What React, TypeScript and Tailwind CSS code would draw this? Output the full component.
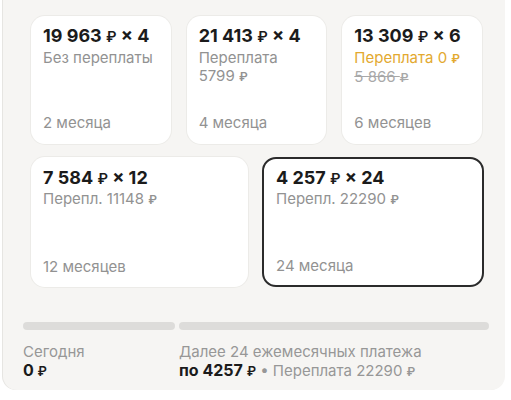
import React from "react";

const Rub = () => <span className="text-[0.8em] font-semibold">₽</span>;

function SmallCard({
    title,
    lines,
    months,
}: {
    title: React.ReactNode;
    lines: React.ReactNode;
    months: string;
}) {
    return (
        <div className="flex h-[128px] flex-col justify-between rounded-[14px] bg-white px-3 pt-[9px] pb-[12px] shadow-[0_0_0_1px_#ecebe8]">
            <div>
                <div className="text-[18px] leading-[22px] font-bold text-[#1b1b1b]">{title}</div>
                <div className="mt-[1px] text-[15px] leading-[18px] text-[#929292]">{lines}</div>
            </div>
            <div className="text-[15px] leading-[18px] text-[#929292]">{months}</div>
        </div>
    );
}

export default function App() {
    return (
        <div className="h-[400px] w-[511px] bg-white font-['Inter',sans-serif]">
            <div className="ml-[3px] h-[390px] w-[502px] rounded-b-[14px] bg-[#f6f5f3] pt-[16px] shadow-[-1px_0_0_#e6e5e2]">
                <div className="ml-[28px] grid w-[451px] grid-cols-3 gap-x-[16px]">
                    <SmallCard
                        title={<>19 963 <Rub /> × 4</>}
                        lines="Без переплаты"
                        months="2 месяца"
                    />
                    <SmallCard
                        title={<>21 413 <Rub /> × 4</>}
                        lines={
                            <>
                                Переплата
                                <br />
                                5799 <Rub />
                            </>
                        }
                        months="4 месяца"
                    />
                    <SmallCard
                        title={<>13 309 <Rub /> × 6</>}
                        lines={
                            <>
                                <span className="text-[#e3a92f]">
                                    Переплата 0 <Rub />
                                </span>
                                <br />
                                <span className="text-[#a8a8a8] line-through">
                                    5 866 <Rub />
                                </span>
                            </>
                        }
                        months="6 месяцев"
                    />
                </div>
                <div className="mt-[13px] ml-[28px] grid w-[453px] grid-cols-[217px_222px] gap-x-[14px]">
                    <div className="flex h-[130px] flex-col justify-between rounded-[14px] bg-white px-3 pt-[10px] pb-[11px] shadow-[0_0_0_1px_#ecebe8]">
                        <div>
                            <div className="text-[18px] leading-[22px] font-bold text-[#1b1b1b]">
                                7 584 <Rub /> × 12
                            </div>
                            <div className="text-[15px] leading-[18px] text-[#929292]">
                                Перепл. 11148 <Rub />
                            </div>
                        </div>
                        <div className="text-[15px] leading-[18px] text-[#929292]">12 месяцев</div>
                    </div>
                    <div className="flex h-[130px] flex-col justify-between rounded-[14px] border-2 border-[#2b2b2b] bg-white px-[12px] pt-[8px] pb-[10px]">
                        <div>
                            <div className="text-[18px] leading-[22px] font-bold text-[#1b1b1b]">
                                4 257 <Rub /> × 24
                            </div>
                            <div className="text-[15px] leading-[18px] text-[#929292]">
                                Перепл. 22290 <Rub />
                            </div>
                        </div>
                        <div className="text-[15px] leading-[18px] text-[#929292]">24 месяца</div>
                    </div>
                </div>
                <div className="mt-[35px] ml-[20px] flex w-[466px] gap-[4px]">
                    <div className="h-[8px] w-[152px] rounded-full bg-[#dddcda]" />
                    <div className="h-[8px] flex-1 rounded-full bg-[#dddcda]" />
                </div>
                <div className="mt-[13px] ml-[20px] flex">
                    <div className="w-[156px]">
                        <div className="text-[15px] leading-[18px] text-[#979797]">Сегодня</div>
                        <div className="text-[16px] leading-[19px] font-bold text-[#1b1b1b]">
                            0 <Rub />
                        </div>
                    </div>
                    <div>
                        <div className="text-[15px] leading-[18px] text-[#979797]">
                            Далее 24 ежемесячных платежа
                        </div>
                        <div className="text-[15px] leading-[19px] text-[#979797]">
                            <span className="text-[16px] font-bold text-[#1b1b1b]">
                                по 4257 <Rub />
                            </span>{" "}
                            • Переплата 22290 <Rub />
                        </div>
                    </div>
                </div>
            </div>
        </div>
    );
}
